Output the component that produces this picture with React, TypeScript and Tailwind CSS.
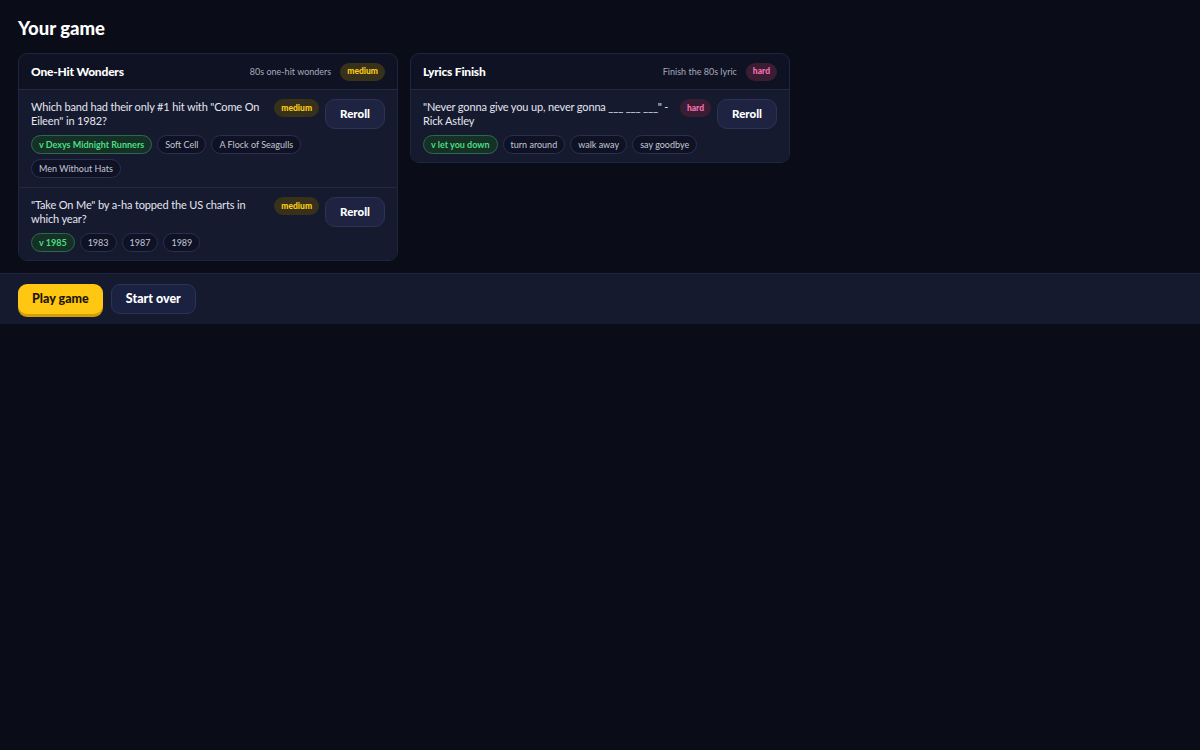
import React from "react";

type Q = {
  text: string;
  level: "medium" | "hard";
  correct: string;
  others: string[];
};

type Card = {
  title: string;
  subtitle: string;
  level: "medium" | "hard";
  questions: Q[];
};

const cards: Card[] = [
  {
    title: "One-Hit Wonders",
    subtitle: "80s one-hit wonders",
    level: "medium",
    questions: [
      {
        text: 'Which band had their only #1 hit with "Come On Eileen" in 1982?',
        level: "medium",
        correct: "Dexys Midnight Runners",
        others: ["Soft Cell", "A Flock of Seagulls", "Men Without Hats"],
      },
      {
        text: '"Take On Me" by a-ha topped the US charts in which year?',
        level: "medium",
        correct: "1985",
        others: ["1983", "1987", "1989"],
      },
    ],
  },
  {
    title: "Lyrics Finish",
    subtitle: "Finish the 80s lyric",
    level: "hard",
    questions: [
      {
        text: '"Never gonna give you up, never gonna ___ ___ ___"\u00a0- Rick Astley',
        level: "hard",
        correct: "let you down",
        others: ["turn around", "walk away", "say goodbye"],
      },
    ],
  },
];

const font = { fontFamily: '"Lato", "Noto Sans", sans-serif' };

function Badge({ level }: { level: "medium" | "hard" }) {
  return level === "medium" ? (
    <span
      style={font}
      className="inline-flex h-[18px] items-center rounded-full bg-[#37311c] px-[7px] text-[8.5px] font-black text-[#facc15]"
    >
      medium
    </span>
  ) : (
    <span
      style={font}
      className="inline-flex h-[18px] items-center rounded-full bg-[#3a1d33] px-[7px] text-[8.5px] font-black text-[#f472b6]"
    >
      hard
    </span>
  );
}

function Question({ q, last }: { q: Q; last: boolean }) {
  return (
    <div
      className={
        "bg-[#161a2f] px-3 pt-[9px] " +
        (last ? "pb-[8px]" : "pb-[9px] border-b border-[#232841]")
      }
    >
      <div className="flex items-start">
        <p
          style={font}
          className="mt-px flex-1 pr-2 text-[11px] leading-[14px] tracking-[-0.15px] text-[#e4e6ef]"
        >
          {q.text}
        </p>
        <div className="flex items-start gap-[6px]">
          <Badge level={q.level} />
          <button
            style={font}
            className="h-[30px] rounded-[10px] border border-[#2d3453] bg-[#1d2340] px-[14px] text-[11.5px] font-black text-white"
          >
            Reroll
          </button>
        </div>
      </div>
      <div className="mt-[6px] flex flex-wrap gap-x-[5px] gap-y-[5px]">
        <span
          style={font}
          className="inline-flex h-[19px] items-center rounded-full border border-[#2b6b4a] bg-[#153127] px-[7px] text-[9px] font-bold text-[#4ade80]"
        >
          v {q.correct}
        </span>
        {q.others.map((o) => (
          <span
            key={o}
            style={font}
            className="inline-flex h-[19px] items-center rounded-full border border-[#283050] bg-[#0e1224] px-[7px] text-[9px] text-[#c3c7d6]"
          >
            {o}
          </span>
        ))}
      </div>
    </div>
  );
}

export default function App() {
  return (
    <div className="min-h-screen bg-[#0a0d18]">
      <div className="px-[18px] pt-[14px]">
        <h1
          style={font}
          className="text-[18.5px] font-black leading-7 text-white"
        >
          Your game
        </h1>
        <div className="mt-[11px] grid grid-cols-3 items-start gap-3">
          {cards.map((c) => (
            <div
              key={c.title}
              className="overflow-hidden rounded-[9px] border border-[#1f2440] bg-[#0f1222]"
            >
              <div className="flex h-[36px] items-center justify-between border-b border-[#232841] px-3">
                <span
                  style={font}
                  className="text-[12px] font-black tracking-[-0.2px] text-white"
                >
                  {c.title}
                </span>
                <div className="flex items-center gap-[9px]">
                  <span style={font} className="text-[9px] text-[#a6aabb]">
                    {c.subtitle}
                  </span>
                  <Badge level={c.level} />
                </div>
              </div>
              {c.questions.map((q, i) => (
                <Question
                  key={i}
                  q={q}
                  last={i === c.questions.length - 1}
                />
              ))}
            </div>
          ))}
        </div>
      </div>
      <div className="mt-3 flex gap-2 border-t border-[#1f2440] bg-[#151a2e] px-[18px] py-[10px]">
        <button
          style={font}
          className="h-[30px] rounded-[9px] bg-[#ffc711] px-[14px] text-[12.5px] font-black text-[#1b1502] shadow-[0_3px_0_#d29e04]"
        >
          Play game
        </button>
        <button
          style={font}
          className="h-[30px] rounded-[9px] border border-[#2d3453] bg-[#1b2140] px-[14px] text-[12.5px] font-black text-white"
        >
          Start over
        </button>
      </div>
    </div>
  );
}
